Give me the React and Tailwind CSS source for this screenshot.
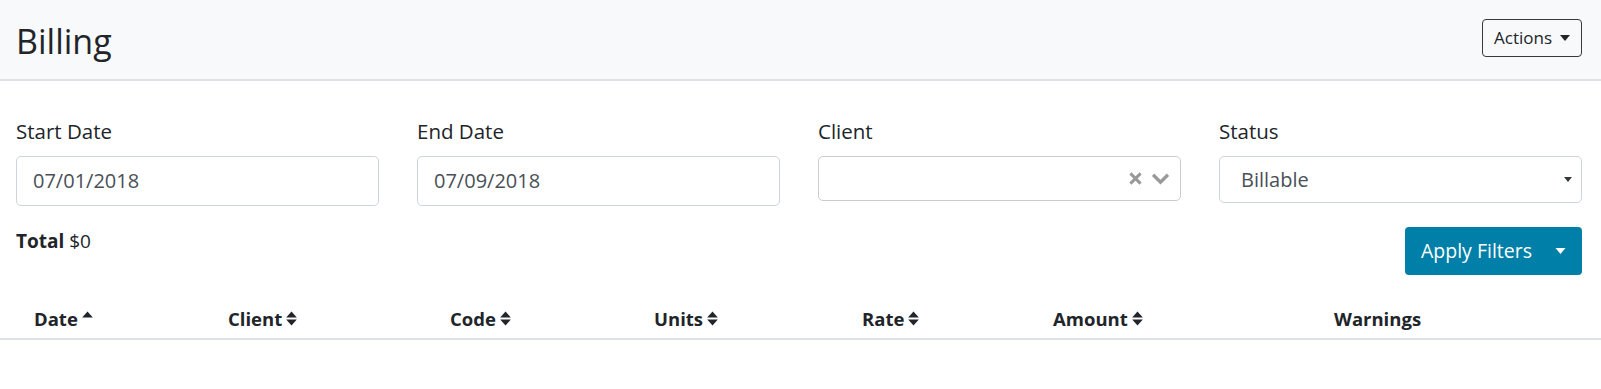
import React from 'react';

const font = { fontFamily: '"Open Sans", "Noto Sans", sans-serif' };

const SortIcon = ({ dir }) => (
  <svg viewBox="0 0 10 16" className="w-[11px] h-[17px] ml-[4px] inline-block" fill="#212529">
    {dir !== 'down' && <path d="M0 7 L5 1.5 L10 7 Z" />}
    {dir !== 'up' && <path d="M0 9 L5 14.5 L10 9 Z" />}
  </svg>
);

const Caret = ({ color = '#212529', size = 'w-[10px] h-[6px]' }) => (
  <svg viewBox="0 0 10 6" className={size} fill={color}>
    <path d="M0 0 L10 0 L5 6 Z" />
  </svg>
);

const columns = [
  { label: 'Date', w: 'w-[194px]', sort: 'up' },
  { label: 'Client', w: 'w-[222px]', sort: 'both' },
  { label: 'Code', w: 'w-[204px]', sort: 'both' },
  { label: 'Units', w: 'w-[208px]', sort: 'both' },
  { label: 'Rate', w: 'w-[191px]', sort: 'both' },
  { label: 'Amount', w: 'w-[281px]', sort: 'both' },
  { label: 'Warnings', w: 'flex-1', sort: null },
];

const Field = ({ label, children }) => (
  <div className="flex flex-col">
    <label className="text-[20.5px] leading-[30px] text-[#212529] mb-[10px]">{label}</label>
    {children}
  </div>
);

const App = () => {
  return (
    <div className="w-[1601px] h-[389px] bg-white text-[#212529]" style={font}>
      <div className="h-[81px] bg-[#f8f9fa] border-b-2 border-[#dee2e6] flex items-center justify-between pl-[16px] pr-[19px]">
        <h3 className="text-[34px] leading-[42px] font-normal text-[#212529] mt-[3px]">Billing</h3>
        <button className="h-[38px] w-[100px] border border-[#343a40] rounded-[4px] flex items-center justify-center gap-[8px] text-[17px] text-[#212529] mt-[-3px]">
          Actions
          <Caret />
        </button>
      </div>

      <div className="pl-[16px] pr-[19px] pt-[35px]">
        <div className="grid grid-cols-4 gap-x-[38px]">
          <Field label="Start Date">
            <div className="h-[50px] border border-[#ced4da] rounded-[5px] flex items-center pl-[16px] text-[20px] text-[#495057]">07/01/2018</div>
          </Field>
          <Field label="End Date">
            <div className="h-[50px] border border-[#ced4da] rounded-[5px] flex items-center pl-[16px] text-[20px] text-[#495057]">07/09/2018</div>
          </Field>
          <Field label="Client">
            <div className="h-[45px] border border-[#cccccc] rounded-[5px] flex items-center justify-end pr-[10px] gap-[9px]">
              <svg viewBox="0 0 14 14" className="w-[13px] h-[13px]" stroke="#999999" strokeWidth="3.2" strokeLinecap="butt">
                <path d="M1.5 1.5 L12.5 12.5 M12.5 1.5 L1.5 12.5" />
              </svg>
              <svg viewBox="0 0 20 14" className="w-[19px] h-[13px]" fill="none" stroke="#999999" strokeWidth="3.6">
                <path d="M2 3 L10 11 L18 3" />
              </svg>
            </div>
          </Field>
          <Field label="Status">
            <div className="h-[47px] border border-[#ced4da] rounded-[5px] flex items-center justify-between pl-[21px] pr-[9px] text-[20px] text-[#495057]">
              <span>Billable</span>
              <Caret color="#343a40" size="w-[8px] h-[7px]" />
            </div>
          </Field>
        </div>

        <div className="flex justify-between items-start mt-[21px]">
          <div className="text-[19px] leading-[26px] text-[#212529] pt-[1px]">
            <span className="font-bold">Total</span> $0
          </div>
          <button className="h-[48px] w-[177px] bg-[#0080a8] rounded-[4px] flex items-center justify-between pl-[16px] pr-[16px] text-white text-[19.5px]">
            <span>Apply Filters</span>
            <Caret color="#ffffff" size="w-[11px] h-[6px]" />
          </button>
        </div>
      </div>

      <div className="mt-[13px] flex border-b-2 border-[#dee2e6] h-[52px] items-end pb-[7px] pl-[16px] pr-[19px]">
        {columns.map((c) => (
          <div key={c.label} className={`${c.w} pl-[18px] flex items-center text-[18.5px] leading-[25px] font-bold text-[#212529]`}>
            {c.label}
            {c.sort && <SortIcon dir={c.sort === 'up' ? 'up' : 'both'} />}
          </div>
        ))}
      </div>
    </div>
  );
};

export default App;
